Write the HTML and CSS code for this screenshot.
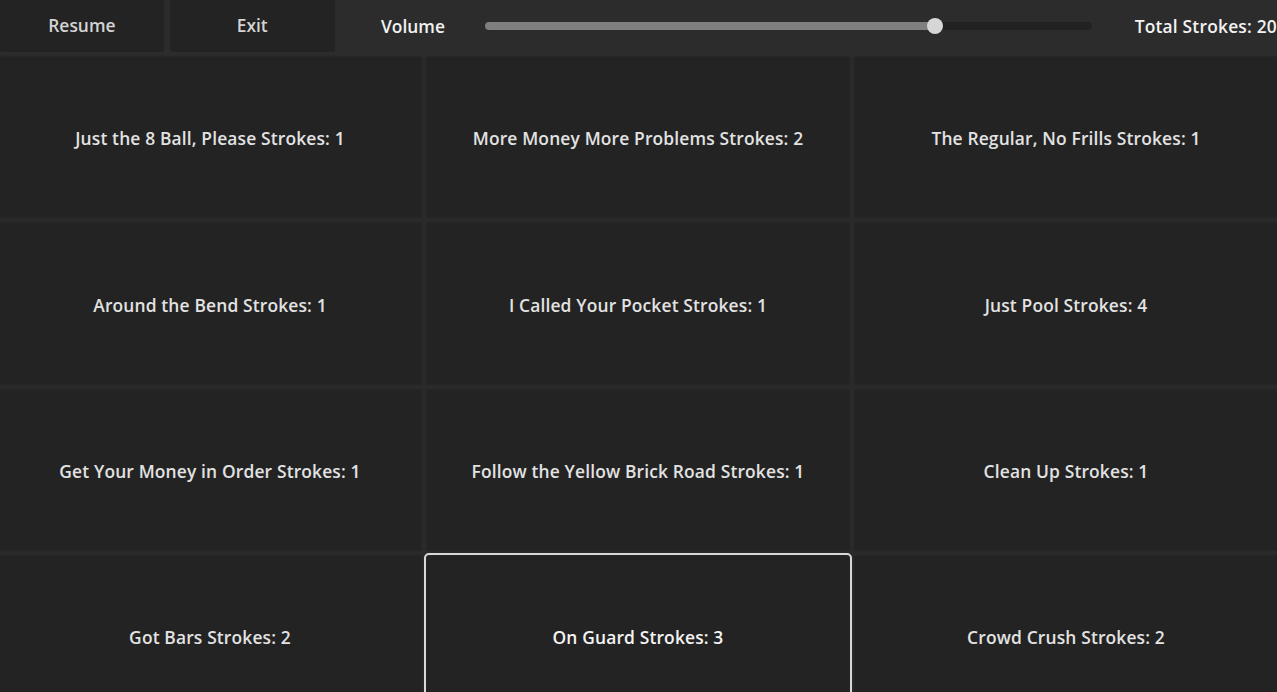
FILE: index.html
```html
<!DOCTYPE html>
<html lang="en">

<head>
    <meta charset="UTF-8" />
    <meta name="viewport" content="width=device-width, initial-scale=1" />
    <title>Levels</title>
    <link rel="stylesheet" href="styles.css">
</head>

<body>
    <header class="top-bar">
        <button class="menu-btn">Resume</button>
        <button class="menu-btn">Exit</button>
        <span class="volume-label">Volume</span>
        <div class="slider">
            <div class="slider-fill" style="width: 74.1%"></div>
            <div class="slider-grab" style="left: 74.1%"></div>
        </div>
        <span class="total">Total Strokes: 20</span>
    </header>

    <main class="level-grid">
        <button class="level">Just the 8 Ball, Please Strokes: 1</button>
        <button class="level">More Money More Problems Strokes: 2</button>
        <button class="level">The Regular, No Frills Strokes: 1</button>
        <button class="level">Around the Bend Strokes: 1</button>
        <button class="level">I Called Your Pocket Strokes: 1</button>
        <button class="level">Just Pool Strokes: 4</button>
        <button class="level">Get Your Money in Order Strokes: 1</button>
        <button class="level">Follow the Yellow Brick Road Strokes: 1</button>
        <button class="level">Clean Up Strokes: 1</button>
        <button class="level">Got Bars Strokes: 2</button>
        <button class="level selected">On Guard Strokes: 3</button>
        <button class="level">Crowd Crush Strokes: 2</button>
    </main>
</body>

</html>
```

FILE: styles.css
```css
/* Reset */

* {
    margin: 0;
    padding: 0;
    box-sizing: border-box;
}

body {
    font-family: 'Open Sans', 'Noto Sans', sans-serif;
    font-weight: 600;
    background: #2a2a2a;
    color: #e0e0e0;
    width: 1277px;
    height: 692px;
    overflow: hidden;
}

button {
    font: inherit;
    border: none;
    cursor: pointer;
}

/* Top bar */

.top-bar {
    display: flex;
    align-items: center;
    height: 57px;
    padding-bottom: 6px;
    background: #2c2c2c;
}

.menu-btn {
    width: 164px;
    height: 52px;
    margin-top: 1px;
    margin-right: 6px;
    padding-bottom: 2px;
    background: #232323;
    color: #d4d4d4;
    font-size: 17.4px;
    border-radius: 0 0 3px 3px;
}

.menu-btn + .menu-btn {
    width: 165px;
}

.volume-label {
    width: 145px;
    text-align: center;
    color: #f2f2f2;
    font-size: 17.4px;
}

.slider {
    position: relative;
    width: 607px;
    height: 8px;
    border-radius: 4px;
    background: #222222;
}

.slider-fill {
    height: 100%;
    border-radius: 4px;
    background: #7f7f7f;
}

.slider-grab {
    position: absolute;
    top: 50%;
    width: 16px;
    height: 16px;
    margin: -8px 0 0 -8px;
    border-radius: 50%;
    background: #d6d6d6;
}

.total {
    margin-left: 43px;
    white-space: nowrap;
    color: #f2f2f2;
    font-size: 17.4px;
    letter-spacing: 0.2px;
}

/* Levels */

.level-grid {
    display: grid;
    grid-template-columns: repeat(3, 422px);
    grid-auto-rows: 160.4px;
    gap: 6px;
    margin-left: -1px;
}

.level {
    background: #232323;
    color: #e2e2e2;
    font-size: 17.4px;
    letter-spacing: 0.15px;
    padding-top: 2px;
    box-shadow: 0 0 2px rgba(0, 0, 0, 0.35);
}

.level.selected {
    outline: 2px solid #d8d8d8;
    outline-offset: 1px;
    border-radius: 2px;
    color: #f4f4f4;
}
```
